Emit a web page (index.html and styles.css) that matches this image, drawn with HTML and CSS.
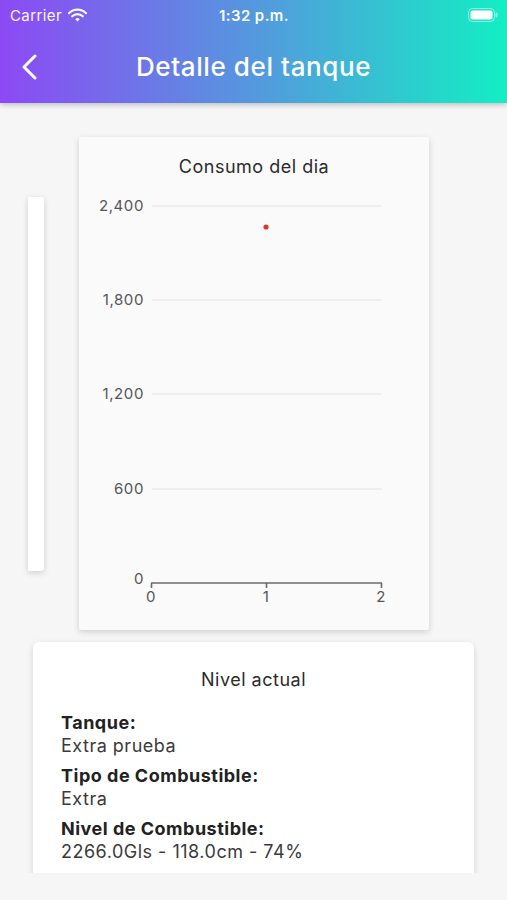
FILE: index.html
```html
<!DOCTYPE html>
<html lang="es">
<head>
  <meta charset="UTF-8">
  <title>Detalle del tanque</title>
  <link rel="stylesheet" href="styles.css">
</head>
<body>
  <header class="app-bar">
    <div class="status-bar">
      <div class="status-left">
        Carrier
        <svg class="wifi" width="19" height="14" viewBox="0 0 19 14">
          <path d="M1 5.2 A12 12 0 0 1 18 5.2" fill="none" stroke="#fff" stroke-width="2.2" stroke-linecap="round"/>
          <path d="M4.2 8.3 A7.5 7.5 0 0 1 14.8 8.3" fill="none" stroke="#fff" stroke-width="2.2" stroke-linecap="round"/>
          <path d="M7.3 11.2 L9.5 13.4 L11.7 11.2 A3.1 3.1 0 0 0 7.3 11.2 Z" fill="#fff"/>
        </svg>
      </div>
      <div class="status-time">1:32 p.m.</div>
      <div class="status-right">
        <svg width="30" height="14" viewBox="0 0 30 14">
          <rect x="0.5" y="0.5" width="26" height="13" rx="4" fill="none" stroke="rgba(255,255,255,0.5)"/>
          <rect x="2.5" y="2.5" width="22" height="9" rx="2" fill="#fff"/>
          <rect x="27.5" y="4.5" width="2" height="5" rx="1" fill="rgba(255,255,255,0.5)"/>
        </svg>
      </div>
    </div>
    <div class="nav-bar">
      <button class="back-btn">
        <svg width="16" height="26" viewBox="0 0 16 26">
          <polyline points="14,2 3,13 14,24" fill="none" stroke="#fff" stroke-width="3" stroke-linecap="round" stroke-linejoin="round"/>
        </svg>
      </button>
      <h1>Detalle del tanque</h1>
      <span></span>
    </div>
  </header>

  <main class="content">
    <div class="carousel">
      <div class="slide slide-side"></div>
      <div class="slide chart-card">
        <div class="card-title">Consumo del dia</div>
        <svg class="chart" width="350" height="443" viewBox="0 0 350 443">
          <g class="grid">
            <line x1="73" y1="19" x2="303" y2="19"/>
            <line x1="73" y1="113" x2="303" y2="113"/>
            <line x1="73" y1="207" x2="303" y2="207"/>
            <line x1="73" y1="302" x2="303" y2="302"/>
          </g>
          <g class="y-labels">
            <text x="65" y="20">2,400</text>
            <text x="65" y="114">1,800</text>
            <text x="65" y="208">1,200</text>
            <text x="65" y="303">600</text>
            <text x="65" y="393">0</text>
          </g>
          <g class="axis">
            <line x1="72" y1="396" x2="303" y2="396"/>
            <line x1="72.5" y1="396" x2="72.5" y2="401"/>
            <line x1="187.5" y1="396" x2="187.5" y2="401"/>
            <line x1="302.5" y1="396" x2="302.5" y2="401"/>
          </g>
          <g class="x-labels">
            <text x="72" y="411">0</text>
            <text x="187" y="411">1</text>
            <text x="302" y="411">2</text>
          </g>
          <circle cx="187" cy="40" r="2.6" fill="#d9382e"/>
        </svg>
      </div>
    </div>

    <div class="info-card">
      <div class="card-title">Nivel actual</div>
      <div class="info-row">
        <div class="info-label">Tanque:</div>
        <div class="info-value">Extra prueba</div>
      </div>
      <div class="info-row">
        <div class="info-label">Tipo de Combustible:</div>
        <div class="info-value">Extra</div>
      </div>
      <div class="info-row">
        <div class="info-label">Nivel de Combustible:</div>
        <div class="info-value">2266.0Gls - 118.0cm - 74%</div>
      </div>
      <div class="info-row">
        <div class="info-label">Ubicación:</div>
        <div class="info-value">Bodega principal</div>
      </div>
    </div>
  </main>
</body>
</html>
```

FILE: styles.css
```css
body {
  margin: 0;
  font-family: 'Inter', 'Liberation Sans', sans-serif;
  background: #f6f6f6;
  color: #333;
  width: 507px;
  height: 900px;
  overflow: hidden;
}
.app-bar {
  height: 103px;
  background: linear-gradient(90deg, #8d49f4, #5598de 50%, #13eec4);
  color: white;
  box-shadow: 0 2px 5px rgba(0,0,0,0.22);
  position: relative;
  z-index: 2;
}
.status-bar {
  height: 30px;
  display: grid;
  grid-template-columns: 1fr auto 1fr;
  align-items: center;
  padding: 0 9px 0 10px;
  font-size: 15px;
  letter-spacing: 0.4px;
}
.status-left {
  display: flex;
  align-items: center;
  gap: 6px;
  opacity: 0.95;
}
.status-time {
  font-weight: 600;
}
.status-right {
  display: flex;
  justify-content: flex-end;
}
.nav-bar {
  height: 73px;
  display: grid;
  grid-template-columns: 70px 1fr 70px;
  align-items: center;
}
.back-btn {
  background: none;
  border: none;
  padding: 0 0 0 21px;
  margin: 0;
  display: flex;
  align-items: center;
  cursor: pointer;
  height: 40px;
}
.nav-bar h1 {
  margin: 0;
  text-align: center;
  font-size: 26px;
  font-weight: 500;
  letter-spacing: 0.6px;
}
.content {
  height: 770px;
  overflow: hidden;
  padding-top: 34px;
  box-sizing: border-box;
}
.carousel {
  display: flex;
  align-items: center;
  gap: 35px;
}
.slide {
  box-shadow: 0 2px 6px rgba(0,0,0,0.16);
}
.slide-side {
  width: 16px;
  height: 374px;
  margin-left: 28px;
  background: white;
  border-radius: 0 3px 3px 0;
}
.chart-card {
  width: 350px;
  height: 493px;
  background: #fafafa;
  border-radius: 2px;
}
.card-title {
  text-align: center;
  font-size: 18px;
  letter-spacing: 0.5px;
  line-height: 22px;
  color: #2b2b2b;
  padding: 19px 0 9px;
}
.chart {
  display: block;
}
.chart .grid line {
  stroke: #e2e2e2;
  stroke-width: 1;
}
.chart .axis line {
  stroke: #6a6a6a;
  stroke-width: 1.6;
}
.chart text {
  font-family: 'Inter', 'Liberation Sans', sans-serif;
  font-size: 15px;
  letter-spacing: 0.6px;
  fill: #555;
  dominant-baseline: middle;
}
.chart .y-labels text {
  text-anchor: end;
}
.chart .x-labels text {
  text-anchor: middle;
}
.info-card {
  width: 441px;
  margin: 12px 0 0 33px;
  background: white;
  border-radius: 6px;
  box-shadow: 0 2px 6px rgba(0,0,0,0.14);
  padding: 7px 28px 20px;
  box-sizing: border-box;
}
.info-card .card-title {
  padding: 20px 0 20px;
}
.info-row {
  margin-bottom: 7px;
  font-size: 18px;
  letter-spacing: 0.5px;
  line-height: 23px;
}
.info-label {
  font-weight: 700;
  color: #222;
}
.info-value {
  color: #3a3a3a;
}
```
